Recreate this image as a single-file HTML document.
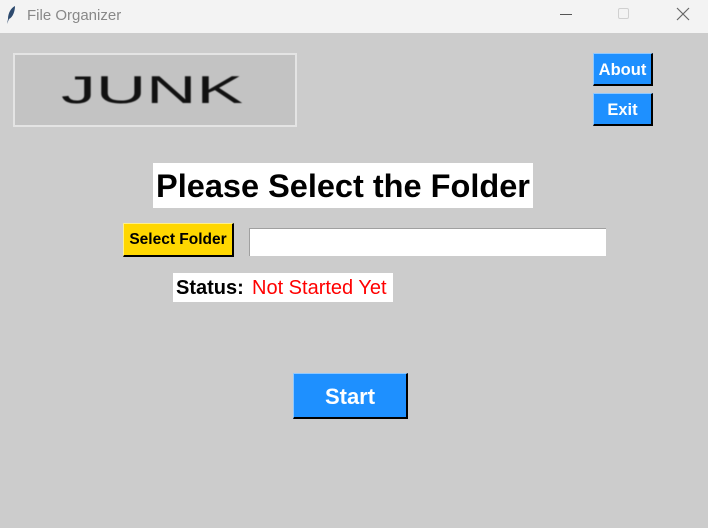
<!DOCTYPE html>
<html><head><style>
body{margin:0;width:708px;height:528px;background:#cccccc;position:relative;overflow:hidden;font-family:"Liberation Sans",Arial,sans-serif}
.a{position:absolute;box-sizing:border-box}
.btn{background:#1e90ff;color:#fff;font-weight:bold;border-right:2px solid #000;border-bottom:2px solid #000;border-top:1px solid #8fc8ff;border-left:1px solid #8fc8ff;display:flex;align-items:center;justify-content:center}
</style></head><body>
<div class="a" style="left:0;top:0;width:708px;height:33px;background:#f3f3f3"></div>
<svg class="a" style="left:5px;top:5px" width="12" height="20" viewBox="0 0 12 20"><path d="M10 1 C6 3 3 8 3 14 L2 19 L4 14 C8 12 10 6 10 1Z" fill="#2d4a6e"/></svg>
<div class="a" style="left:27px;top:7px;font-size:15px;color:#888">File Organizer</div>
<div class="a" style="left:560px;top:14px;width:12px;height:1px;background:#555"></div>
<div class="a" style="left:618px;top:8px;width:11px;height:11px;border:1px solid #d0d0d0;border-radius:2px"></div>
<svg class="a" style="left:676px;top:7px" width="14" height="14"><path d="M1 1L13 13M13 1L1 13" stroke="#666" stroke-width="1.2"/></svg>
<div class="a" style="left:13px;top:53px;width:284px;height:74px;border:2px solid #e4e4e4;background:#c3c3c3"></div>
<svg class="a" style="left:0;top:0" width="300" height="130"><text x="61" y="103" font-family="Liberation Sans,sans-serif" font-size="39" textLength="182" lengthAdjust="spacingAndGlyphs" fill="#111" style="filter:blur(0.6px)">JUNK</text></svg>
<div class="a btn" style="left:593px;top:53px;width:60px;height:33px;font-size:16.5px;padding-top:2px">About</div>
<div class="a btn" style="left:593px;top:93px;width:60px;height:33px;font-size:16.5px;padding-top:2px">Exit</div>
<div class="a" style="left:153px;top:163px;width:380px;height:45px;background:#fff;font-size:32.5px;font-weight:bold;display:flex;align-items:center;justify-content:center;white-space:nowrap;padding-top:2px">Please Select the Folder</div>
<div class="a" style="left:123px;top:223px;width:111px;height:34px;background:#ffd700;border-right:2px solid #000;border-bottom:2px solid #000;border-top:1px solid #fff08a;border-left:1px solid #fff08a;font-size:15.5px;font-weight:bold;display:flex;align-items:center;justify-content:center;white-space:nowrap">Select Folder</div>
<div class="a" style="left:249px;top:228px;width:357px;height:28px;background:#fff;border-top:1px solid #a0a0a0;border-left:1px solid #a0a0a0"></div>
<div class="a" style="left:173px;top:273px;width:220px;height:29px;background:#fff"></div>
<div class="a" style="left:176px;top:277px;font-size:20px;font-weight:bold">Status:</div>
<div class="a" style="left:252px;top:277px;font-size:20px;color:#ff0000">Not Started Yet</div>
<div class="a btn" style="left:293px;top:373px;width:115px;height:46px;font-size:22px;padding-top:2px">Start</div>
</body></html>
